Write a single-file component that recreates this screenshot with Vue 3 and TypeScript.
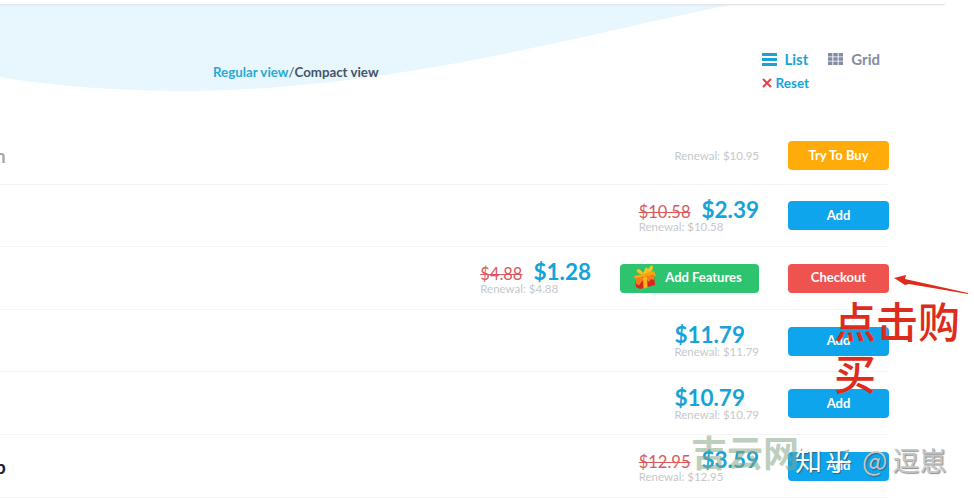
<script setup lang="ts">
interface Row {
  name?: string
  old?: string
  price?: string
  renewal: string
  button: string
  kind: string
  features?: boolean
}
const rows: Row[] = [
  { name: 'n', renewal: 'Renewal: $10.95', button: 'Try To Buy', kind: 'try' },
  { old: '$10.58', price: '$2.39', renewal: 'Renewal: $10.58', button: 'Add', kind: 'add' },
  { old: '$4.88', price: '$1.28', renewal: 'Renewal: $4.88', button: 'Checkout', kind: 'checkout', features: true },
  { price: '$11.79', renewal: 'Renewal: $11.79', button: 'Add', kind: 'add' },
  { price: '$10.79', renewal: 'Renewal: $10.79', button: 'Add', kind: 'add' },
  { name: 'p', old: '$12.95', price: '$3.59', renewal: 'Renewal: $12.95', button: 'Add', kind: 'add' }
]
</script>

<template>
  <div class="page">
    <svg class="wave" width="974" height="100" viewBox="0 0 974 100" aria-hidden="true">
      <path d="M0 5H730C600 30 400 89 190 91C120 91 50 86 0 77Z" fill="#e8f7fe" />
    </svg>
    <div class="topbar"></div>

    <header class="hero">
      <div class="views"><span class="blue">Regular view</span><span class="sep">/</span>Compact view</div>
      <div class="controls">
        <div class="modes">
          <span class="mode active">
            <svg width="15" height="13" viewBox="0 0 15 13"><path d="M0 0h15v3H0zM0 5h15v3H0zM0 10h15v3H0z" fill="#18a3d8" /></svg>
            List
          </span>
          <span class="mode">
            <svg width="15" height="12" viewBox="0 0 15 12"><path d="M0 0h4.400v3.600H0zM5.300 0h4.400v3.600H5.300zM10.600 0H15v3.600h-4.400zM0 4.200h4.400v3.600H0zM5.300 4.200h4.400v3.600H5.300zM10.600 4.200H15v3.600h-4.400zM0 8.400h4.400V12H0zM5.300 8.400h4.400V12H5.300zM10.600 8.400H15V12h-4.400z" fill="#838ca3" /></svg>
            Grid
          </span>
        </div>
        <div class="reset">
          <svg width="10" height="10" viewBox="0 0 10 10"><path d="M1 1l8 8M9 1l-8 8" stroke="#e5404c" stroke-width="2" /></svg>
          Reset
        </div>
      </div>
    </header>

    <section class="rows">
      <div v-for="(row, i) in rows" :key="i" class="row" :class="{ first: i === 0 }">
        <span class="name" :class="{ dark: i > 0 }">{{ row.name }}</span>
        <div class="price-block">
          <div v-if="row.price" class="prices">
            <s v-if="row.old" class="old">{{ row.old }}</s>
            <span class="price">{{ row.price }}</span>
          </div>
          <div class="renewal">{{ row.renewal }}</div>
        </div>
        <button v-if="row.features" class="btn features">
          <svg width="22" height="24" viewBox="0 0 22 24">
            <path d="M9 8C6 4 4 3 3 5s2 4 6 4c5 0 10-2 10-7 0-2-2-2-3 0l-2 2-2-2c-1 1-1 4-3 6Z" fill="#ffc21a" />
            <path d="M0 11l20-5 2 5-20 5Z" fill="#f7a412" />
            <path d="M1 14l19-4 1 10-15 4-4-2Z" fill="#d9261c" />
            <path d="M9 12.500l4-1 .5 11-4 1Z" fill="#ffb21a" />
            <path d="M1 14l8-1.500v3l-2 2-2 3-3-2Zm12-2.500l7-1.500v5l-3-1-2 3-2-2Z" fill="#f0801a" />
          </svg>
          <span>Add Features</span>
        </button>
        <button class="btn action" :class="row.kind">{{ row.button }}</button>
      </div>
    </section>

    <svg class="arrow" width="80" height="24" viewBox="0 0 80 24" aria-hidden="true">
      <path d="M1 4L13 1 12 5 75 19V20L16 10 12 11Z" fill="#dd2c1c" />
    </svg>
    <div class="note">点击购买</div>

    <div class="mark-cn">吉云网</div>
    <div class="mark-zh"><span class="zh">知乎</span><span class="at">@</span><span class="user">逗崽</span></div>
  </div>
</template>

<style>
body {
  margin: 0;
  background: #fff;
}
</style>

<style scoped>
.page {
  position: relative;
  width: 974px;
  height: 500px;
  overflow: hidden;
  background: #fff;
  font-family: "Lato", "Noto Sans", sans-serif;
  color: #46536a;
}
.wave {
  position: absolute;
  top: 0;
  left: 0;
}
.topbar {
  position: relative;
  width: 945px;
  height: 4px;
  background: #fff;
  box-shadow: 0 1px 2px rgba(120, 130, 150, 0.28);
}
.hero {
  position: relative;
  display: flex;
  height: 118px;
  padding: 0 94px 0 213px;
}
.views {
  margin-top: 60px;
  font-size: 13.3px;
  font-weight: 700;
  line-height: 16px;
}
.blue {
  color: #2ba9d3;
}
.sep {
  color: #46536a;
  font-weight: 400;
}
.controls {
  margin-left: auto;
  padding-top: 44px;
}
.modes {
  display: flex;
  gap: 20px;
  font-size: 15px;
  font-weight: 700;
  line-height: 22px;
  color: #838ca3;
}
.mode {
  display: flex;
  align-items: center;
  gap: 8px;
}
.mode.active {
  color: #18a3d8;
}
.reset {
  display: flex;
  align-items: center;
  gap: 4px;
  margin-top: 3px;
  font-size: 13.5px;
  font-weight: 700;
  line-height: 20px;
  color: #18a3d8;
}
.row {
  display: flex;
  align-items: center;
  box-sizing: border-box;
  height: 62.6px;
  width: 889px;
  padding-top: 1px;
  border-bottom: 1px solid #f3f4f6;
}
.row.first {
  padding-top: 6px;
}
.name {
  margin-left: -5px;
  margin-right: auto;
  font-size: 19px;
  font-weight: 700;
  color: #a8a8a8;
}
.name.dark {
  color: #17233f;
}
.price-block {
  margin-right: 29px;
}
.prices {
  display: flex;
  align-items: baseline;
  gap: 11px;
  height: 24px;
  line-height: 24px;
}
.old {
  font-size: 16.5px;
  color: #d9595f;
}
.price {
  font-size: 22.500px;
  font-weight: 700;
  color: #18a3d8;
}
.renewal {
  font-size: 11.5px;
  line-height: 14px;
  color: #c5c8cc;
}
.prices + .renewal {
  margin-top: -2px;
}
.btn {
  display: flex;
  align-items: center;
  justify-content: center;
  box-sizing: border-box;
  height: 29px;
  border: 0;
  border-radius: 4px;
  padding: 0 0 2px;
  font-family: inherit;
  font-size: 13px;
  font-weight: 700;
  color: #fff;
}
.action {
  width: 101px;
}
.try {
  background: #ffab0a;
}
.add {
  background: #0ea5ec;
}
.checkout {
  background: #ef5350;
}
.features {
  width: 139px;
  gap: 9px;
  margin-right: 29px;
  padding-right: 3px;
  background: #2ec46f;
}
.arrow {
  position: absolute;
  top: 274px;
  left: 893px;
}
.note {
  position: absolute;
  top: 294px;
  left: 834px;
  width: 130px;
  font-family: "Noto Sans CJK SC", sans-serif;
  font-size: 42px;
  font-weight: 500;
  line-height: 52px;
  color: #dd2c1c;
}
.mark-cn {
  position: absolute;
  top: 431px;
  left: 691px;
  font-family: "Noto Sans CJK SC", sans-serif;
  font-size: 36px;
  font-weight: 700;
  line-height: 40px;
  color: rgba(130, 165, 130, 0.55);
}
.mark-zh {
  position: absolute;
  top: 442px;
  left: 795px;
  display: flex;
  align-items: center;
  font-family: "Noto Sans CJK SC", sans-serif;
  font-size: 27px;
  line-height: 36px;
  white-space: nowrap;
  color: #c4c6c8;
  text-shadow: 1px 1px 1px rgba(60, 60, 60, 0.6);
}
.zh {
  letter-spacing: 3px;
  color: #fff;
}
.at {
  margin-left: 7px;
  margin-right: 5px;
}
</style>
